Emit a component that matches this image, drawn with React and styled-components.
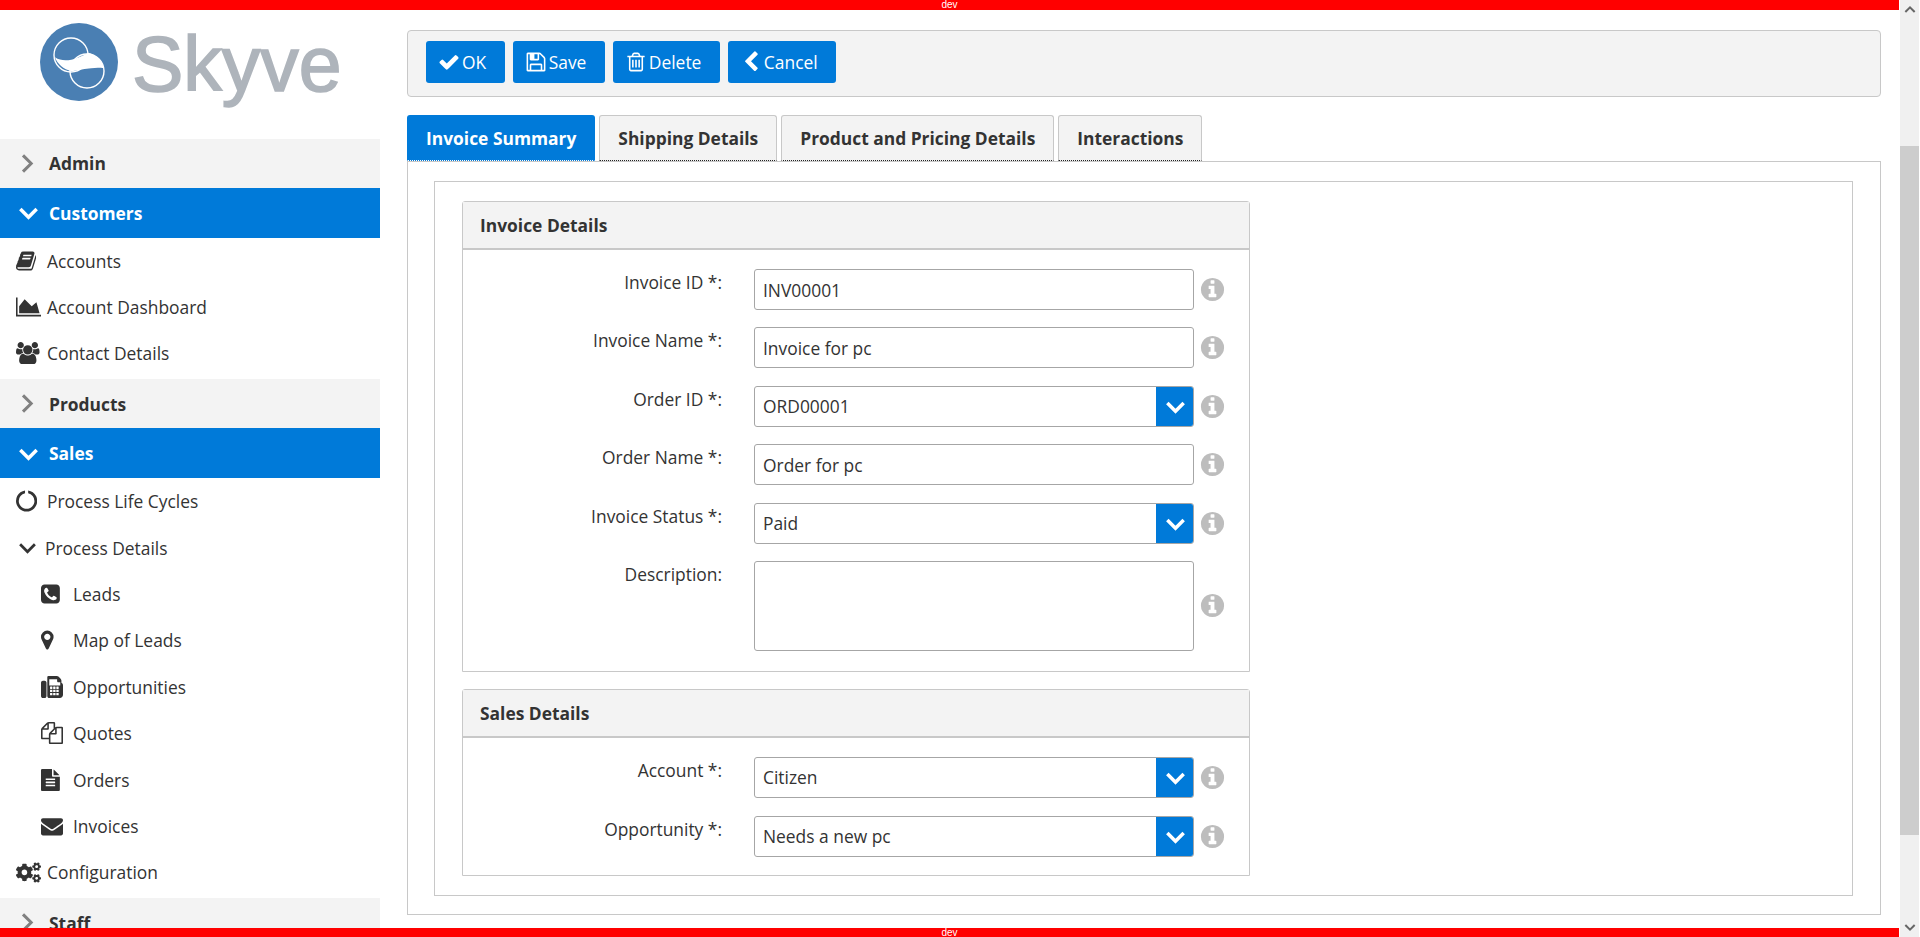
import React from "react";
import styled, { createGlobalStyle } from "styled-components";
import { FaCogs } from "react-icons/fa";

const BLUE = "#007ad9";
const LINE = "#c8c8c8";
const TEXT = "#333333";

const GlobalStyle = createGlobalStyle`
  html, body {
    margin: 0;
    height: 100%;
    overflow: hidden;
    background: #ffffff;
  }
  * {
    box-sizing: border-box;
  }
`;

const Page = styled.div`
  position: relative;
  display: flex;
  width: 1920px;
  height: 937px;
  overflow: hidden;
  font-family: "Open Sans", sans-serif;
  font-size: 17.4px;
  color: ${TEXT};
`;

const DevBar = styled.div`
  position: absolute;
  left: 0;
  ${(p) => (p.$bottom ? "bottom: 0; height: 9px;" : "top: 0; height: 10px;")}
  width: 1899px;
  background: #ff0000;
  color: #ffffff;
  font-family: "Liberation Sans", sans-serif;
  font-size: 10px;
  line-height: 10px;
  text-align: center;
  z-index: 2;
`;

/* sidebar */

const Sidebar = styled.aside`
  flex: none;
  width: 380px;
  overflow: hidden;
`;

const Logo = styled.div`
  display: flex;
  gap: 14px;
  height: 138.5px;
  padding: 23px 0 0 40px;

  svg {
    flex: none;
  }
`;

const LogoWord = styled.span`
  font-family: "Liberation Sans", sans-serif;
  font-size: 77px;
  line-height: 78px;
  margin-top: 2px;
  color: #aeb4bb;
  -webkit-text-stroke: 1.6px #aeb4bb;
`;

const Section = styled.div`
  display: flex;
  align-items: center;
  height: 49.5px;
  font-weight: 700;
  background: ${(p) => (p.$open ? BLUE : "#f3f3f3")};
  color: ${(p) => (p.$open ? "#ffffff" : TEXT)};

  svg {
    flex: none;
    margin-left: ${(p) => (p.$open ? "18px" : "16px")};
    margin-right: ${(p) => (p.$open ? "10px" : "12px")};
  }
`;

const Items = styled.div`
  padding-bottom: 2.3px;
`;

const Item = styled.div`
  display: flex;
  align-items: center;
  height: 46.4px;
  padding-left: ${(p) => (p.$nested ? "41px" : "16px")};
`;

const IconSlot = styled.span`
  display: flex;
  align-items: center;
  flex: none;
  width: ${(p) => (p.$nested ? "32px" : "31px")};
  color: ${TEXT};
`;

const TreeToggle = styled.span`
  display: flex;
  align-items: center;
  flex: none;
  width: 27px;
  margin-left: 2px;
`;

/* main column */

const Main = styled.main`
  flex: 1;
  min-width: 0;
  padding: 30px 19px 0 27px;
`;

const Toolbar = styled.div`
  display: flex;
  gap: 8px;
  height: 67px;
  padding: 10px 18px;
  background: #f3f3f3;
  border: 1px solid ${LINE};
  border-radius: 4px;
`;

const ActionButton = styled.button`
  display: flex;
  align-items: center;
  gap: 2px;
  height: 42px;
  padding: 0 18.5px 0 12px;
  border: none;
  border-radius: 3px;
  background: ${BLUE};
  color: #ffffff;
  font-family: inherit;
  font-size: 17.4px;
`;

const Tabs = styled.div`
  display: flex;
  gap: 4px;
  height: 46px;
  margin-top: 18px;
`;

const Tab = styled.div`
  display: flex;
  align-items: center;
  padding: 0 18px;
  font-weight: 700;
  border: 1px solid ${(p) => (p.$active ? BLUE : LINE)};
  border-bottom: 1px dotted ${(p) => (p.$active ? "#ffffff" : "#222222")};
  border-radius: 3px 3px 0 0;
  background: ${(p) => (p.$active ? BLUE : "#f3f3f3")};
  color: ${(p) => (p.$active ? "#ffffff" : TEXT)};
`;

const TabPanel = styled.div`
  height: 754px;
  padding: 19px 27px 19px 26px;
  border: 1px solid ${LINE};
`;

const InnerBox = styled.div`
  height: 715px;
  padding: 19px 27px;
  border: 1px solid ${LINE};
`;

const Panel = styled.section`
  width: 788px;
  border: 1px solid ${LINE};
  border-radius: 3px 3px 0 0;

  & + & {
    margin-top: 17px;
  }
`;

const PanelHeader = styled.h2`
  margin: 0;
  height: 48px;
  padding: 0 17px;
  font-size: 17.4px;
  font-weight: 700;
  line-height: 46px;
  background: #f3f3f3;
  border-bottom: 2px solid ${LINE};
`;

const FormGrid = styled.div`
  display: grid;
  grid-template-columns: 259px 440px 22px;
  column-gap: 32px;
  row-gap: ${(p) => p.$gap}px;
  padding: 19px 0 ${(p) => p.$bottom}px;

  > :nth-child(3n) {
    margin-left: -27px;
  }
`;

const FieldLabel = styled.label`
  padding-top: 1px;
  line-height: 24px;
  text-align: right;
`;

const TextInput = styled.input`
  display: block;
  width: 440px;
  height: 41px;
  padding: 0 8px;
  border: 1px solid #a6a6a6;
  border-radius: 3px;
  font-family: inherit;
  font-size: 17.4px;
  color: ${TEXT};
  background: #ffffff;
`;

const TextArea = styled.textarea`
  display: block;
  width: 440px;
  height: 90px;
  padding: 8px;
  border: 1px solid #a6a6a6;
  border-radius: 3px;
  resize: none;
  font-family: inherit;
  font-size: 17.4px;
`;

const Dropdown = styled.div`
  display: flex;
  width: 440px;
  height: 41px;
  border: 1px solid #a6a6a6;
  border-radius: 3px;
  overflow: hidden;
`;

const DropdownValue = styled.span`
  flex: 1;
  padding: 0 8px;
  line-height: 39px;
`;

const DropdownArrow = styled.span`
  display: flex;
  align-items: center;
  justify-content: center;
  flex: none;
  width: 38px;
  margin: -1px -1px -1px 0;
  background: ${BLUE};
`;

const Info = styled.span`
  display: flex;
  align-items: center;
  align-self: center;
  color: #bdbdbd;
`;

/* fake window scrollbar, the reference has a styled one */

const ScrollBar = styled.div`
  flex: none;
  display: flex;
  flex-direction: column;
  width: 19px;
  margin-right: 1px;
  background: #f0f0f0;
`;

const ScrollArrow = styled.span`
  display: flex;
  align-items: center;
  justify-content: center;
  height: 20px;
`;

const ScrollThumb = styled.div`
  height: 689px;
  margin: 126px 0 82px;
  background: #cdcdcd;
`;

const Chevron = ({ dir = "right", color = "#ffffff", size = 18, width = 3 }) => {
  const points = {
    right: "6,2 13,9 6,16",
    down: "2,6 9,13 16,6",
    up: "2,12 9,5 16,12",
  }[dir];
  return (
    <svg width={size} height={size} viewBox="0 0 18 18" fill="none">
      <polyline points={points} stroke={color} strokeWidth={width} />
    </svg>
  );
};

// font awesome 4 glyphs, vx/w crop the 1792 box to the glyph's own advance
const Fa4 = ({ d, size = 22, vx = 0, w = 1792 }) => (
  <svg
    width={(size * w) / 1792}
    height={size}
    viewBox={`${vx} 0 ${w} 1792`}
    fill="currentColor"
  >
    <path d={d} />
  </svg>
);

const paths = {
  book: "M1639 478q40 57 18 129l-275 906q-19 64-76.5 107.5t-122.5 43.5h-923q-77 0-148.5-53.5t-99.5-131.5q-24-67-2-127 0-4 3-27t4-37q1-8-3-21.5t-3-19.5q2-11 8-21t16.5-23.5 16.5-23.5q23-38 45-91.5t30-91.5q3-10 .5-30t-.5-28q3-11 17-28t17-23q21-36 42-92t25-90q1-9-2.5-32t.5-28q4-13 22-30.5t22-22.5q19-26 42.5-84.5t27.5-96.5q1-8-3-25.5t-2-26.5q2-8 9-18t18-23 17-21q8-12 16.5-30.5t15-35 16-36 19.5-32 26.5-23.5 36-11.5 47.5 5.5l-1 3q38-9 51-9h761q74 0 114 56t18 130l-274 906q-36 119-71.5 153.5t-128.5 34.5h-869q-27 0-38 15-11 16-1 43 24 70 144 70h923q29 0 56-15.5t35-41.5l300-987q7-22 5-57 38 15 59 43zm-1064 2q-4 13 2 22.5t20 9.5h608q13 0 25.5-9.5t16.5-22.5l21-64q4-13-2-22.5t-20-9.5h-608q-13 0-25.5 9.5t-16.5 22.5zm-83 256q-4 13 2 22.5t20 9.5h608q13 0 25.5-9.5t16.5-22.5l21-64q4-13-2-22.5t-20-9.5h-608q-13 0-25.5 9.5t-16.5 22.5z",
  area: "M2048 1536v128h-2048v-1536h128v1408h1920zm-384-1024l256 896h-1664v-576l448-576 576 576z",
  users:
    "M593 896q-162 5-265 128h-134q-82 0-138-40.5t-56-118.5q0-353 124-353 6 0 43.5 21t97.5 42.5 119 21.5q67 0 133-23-5 37-5 66 0 139 81 256zm1071 637q0 120-73 189.5t-194 69.5h-874q-121 0-194-69.5t-73-189.5q0-53 3.5-103.5t14-109 26.5-108.5 43-97.5 62-81 85.5-53.5 111.5-20q10 0 43 21.5t73 48 107 48 135 21.5 135-21.5 107-48 73-48 43-21.5q61 0 111.5 20t85.5 53.5 62 81 43 97.5 26.5 108.5 14 109 3.5 103.5zm-1024-1277q0 106-75 181t-181 75-181-75-75-181 75-181 181-75 181 75 75 181zm704 384q0 159-112.5 271.5t-271.5 112.5-271.5-112.5-112.5-271.5 112.5-271.5 271.5-112.5 271.5 112.5 112.5 271.5zm576 225q0 78-56 118.5t-138 40.5h-134q-103-123-265-128 81-117 81-256 0-29-5-66 66 23 133 23 59 0 119-21.5t97.5-42.5 43.5-21q124 0 124 353zm-128-609q0 106-75 181t-181 75-181-75-75-181 75-181 181-75 181 75 75 181z",
  files:
    "M1696 384q40 0 68 28t28 68v1216q0 40-28 68t-68 28h-960q-40 0-68-28t-28-68v-288h-544q-40 0-68-28t-28-68v-672q0-40 20-88t48-76l408-408q28-28 76-48t88-20h416q40 0 68 28t28 68v328q68-40 128-40h416zm-544 213l-299 299h299v-299zm-640-384l-299 299h299v-299zm196 647l316-316v-416h-384v416q0 40-28 68t-68 28h-416v640h512v-256q0-40 20-92t48-80zm956 804v-1152h-384v416q0 40-28 68t-68 28h-416v640h896z",
  notch:
    "M1760 896q0 176-68.5 336t-184 275.5-275.5 184-336 68.5-336-68.5-275.5-184-184-275.5-68.5-336q0-213 97-398.5t265-305.5 374-151v228q-221 45-366.5 221t-145.5 406q0 130 51 248.5t136.5 204 204 136.5 248.5 51 248.5-51 204-136.5 136.5-204 51-248.5q0-230-145.5-406t-366.5-221v-228q206 31 374 151t265 305.5 97 398.5z",
  phone:
    "M1408 1193q0-11-2-16t-18-16.5-40.5-25-47.5-26.5-45.5-25-28.5-15q-5-3-19-13t-25-15-21-5q-15 0-36.5 20.5t-39.5 45-38.5 45-33.5 20.5q-7 0-16.5-3.5t-15.5-6.5-17-9.5-14-8.5q-99-55-170-126.5t-127-170.5q-2-3-8.5-14t-9.5-17-6.5-15.5-3.5-16.5q0-13 20.5-33.5t45-38.5 45-39.5 20.5-36.5q0-10-5-21t-15-25-13-19q-3-6-15-28.5t-25-45.5-26.5-47.5-25-40.5-16.5-18-16-2q-48 0-101 22-46 21-80 94.5t-34 130.5q0 16 2.5 34t5 30.5 9 33 10 29.5 12.5 33 11 30q60 164 216.5 320.5t320.5 216.5q6 2 30 11t33 12.5 29.5 10 33 9 30.5 5 34 2.5q57 0 130.5-34t94.5-80q22-53 22-101zm256-777v960q0 119-84.5 203.5t-203.5 84.5h-960q-119 0-203.5-84.5t-84.5-203.5v-960q0-119 84.5-203.5t203.5-84.5h960q119 0 203.5 84.5t84.5 203.5z",
  marker:
    "M1152 640q0-106-75-181t-181-75-181 75-75 181 75 181 181 75 181-75 75-181zm256 0q0 109-33 179l-364 774q-16 33-47.5 52t-67.5 19-67.5-19-46.5-52l-365-774q-33-70-33-179 0-212 150-362t362-150 362 150 150 362z",
  fax: "M288 384q66 0 113 47t47 113v1088q0 66-47 113t-113 47h-128q-66 0-113-47t-47-113v-1088q0-66 47-113t113-47h128zm1376 163q58 34 93 93t35 128v768q0 106-75 181t-181 75h-864q-66 0-113-47t-47-113v-1536q0-40 28-68t68-28h672q40 0 88 20t76 48l152 152q28 28 48 76t20 88v163zm-736 989v-128q0-14-9-23t-23-9h-128q-14 0-23 9t-9 23v128q0 14 9 23t23 9h128q14 0 23-9t9-23zm0-256v-128q0-14-9-23t-23-9h-128q-14 0-23 9t-9 23v128q0 14 9 23t23 9h128q14 0 23-9t9-23zm0-256v-128q0-14-9-23t-23-9h-128q-14 0-23 9t-9 23v128q0 14 9 23t23 9h128q14 0 23-9t9-23zm256 512v-128q0-14-9-23t-23-9h-128q-14 0-23 9t-9 23v128q0 14 9 23t23 9h128q14 0 23-9t9-23zm0-256v-128q0-14-9-23t-23-9h-128q-14 0-23 9t-9 23v128q0 14 9 23t23 9h128q14 0 23-9t9-23zm0-256v-128q0-14-9-23t-23-9h-128q-14 0-23 9t-9 23v128q0 14 9 23t23 9h128q14 0 23-9t9-23zm256 512v-128q0-14-9-23t-23-9h-128q-14 0-23 9t-9 23v128q0 14 9 23t23 9h128q14 0 23-9t9-23zm0-256v-128q0-14-9-23t-23-9h-128q-14 0-23 9t-9 23v128q0 14 9 23t23 9h128q14 0 23-9t9-23zm0-256v-128q0-14-9-23t-23-9h-128q-14 0-23 9t-9 23v128q0 14 9 23t23 9h128q14 0 23-9t9-23zm128-256v-256h-160q-40 0-68-28t-28-68v-160h-640v512h896z",
  fileText:
    "M1596 476q14 14 28 36h-472v-472q22 14 36 28zm-476 164h544v1056q0 40-28 68t-68 28h-1344q-40 0-68-28t-28-68v-1600q0-40 28-68t68-28h800v544q0 40 28 68t68 28zm160 736v-64q0-14-9-23t-23-9h-704q-14 0-23 9t-9 23v64q0 14 9 23t23 9h704q14 0 23-9t9-23zm0-256v-64q0-14-9-23t-23-9h-704q-14 0-23 9t-9 23v64q0 14 9 23t23 9h704q14 0 23-9t9-23zm0-256v-64q0-14-9-23t-23-9h-704q-14 0-23 9t-9 23v64q0 14 9 23t23 9h704q14 0 23-9t9-23z",
  envelope:
    "M1792 710v794q0 66-47 113t-113 47h-1472q-66 0-113-47t-47-113v-794q44 49 101 87 362 246 497 345 57 42 92.5 65.5t94.5 48 110 24.5h2q51 0 110-24.5t94.5-48 92.5-65.5q170-123 498-345 57-39 100-87zm0-294q0 79-49 151t-122 123q-376 261-468 325-10 7-42.5 30.5t-54 38-52 32.5-57.5 27-50 9h-2q-23 0-50-9t-57.5-27-52-32.5-54-38-42.5-30.5q-91-64-262-182.5t-205-142.5q-62-42-117-115.5t-55-136.5q0-78 41.5-130t118.5-52h1472q65 0 112.5 47t47.5 113z",
  check:
    "M1671 566q0 40-28 68l-724 724-136 136q-28 28-68 28t-68-28l-136-136-362-362q-28-28-28-68t28-68l136-136q28-28 68-28t68 28l294 295 656-657q28-28 68-28t68 28l136 136q28 28 28 68z",
  save: "M512 1536h768v-384h-768v384zm896 0h128v-896q0-14-10-38.5t-20-34.5l-281-281q-10-10-34-20t-39-10v416q0 40-28 68t-68 28h-576q-40 0-68-28t-28-68v-416h-128v1280h128v-416q0-40 28-68t68-28h832q40 0 68 28t28 68v416zm-384-928v-320q0-13-9.5-22.5t-22.5-9.5h-192q-13 0-22.5 9.5t-9.5 22.5v320q0 13 9.5 22.5t22.5 9.5h192q13 0 22.5-9.5t9.5-22.5zm640 32v928q0 40-28 68t-68 28h-1344q-40 0-68-28t-28-68v-1344q0-40 28-68t68-28h928q40 0 88 20t76 48l280 280q28 28 48 76t20 88z",
  trash:
    "M704 736v576q0 14-9 23t-23 9h-64q-14 0-23-9t-9-23v-576q0-14 9-23t23-9h64q14 0 23 9t9 23zm256 0v576q0 14-9 23t-23 9h-64q-14 0-23-9t-9-23v-576q0-14 9-23t23-9h64q14 0 23 9t9 23zm256 0v576q0 14-9 23t-23 9h-64q-14 0-23-9t-9-23v-576q0-14 9-23t23-9h64q14 0 23 9t9 23zm128 724v-948h-896v948q0 22 7 40.5t14.5 27 10.5 8.5h832q3 0 10.5-8.5t14.5-27 7-40.5zm-672-1076h448l-48-117q-7-9-17-11h-317q-10 2-17 11zm928 32v64q0 14-9 23t-23 9h-96v948q0 83-47 143.5t-113 60.5h-832q-66 0-113-58.5t-47-141.5v-952h-96q-14 0-23-9t-9-23v-64q0-14 9-23t23-9h309l70-167q15-37 54-63t79-26h320q40 0 79 26t54 63l70 167h309q14 0 23 9t9 23z",
  left: "M1427 301l-531 531 531 531q19 19 19 45t-19 45l-166 166q-19 19-45 19t-45-19l-742-742q-19-19-19-45t19-45l742-742q19-19 45-19t45 19l166 166q19 19 19 45t-19 45z",
  info: "M1152 1376v-160q0-14-9-23t-23-9h-96v-512q0-14-9-23t-23-9h-320q-14 0-23 9t-9 23v160q0 14 9 23t23 9h96v320h-96q-14 0-23 9t-9 23v160q0 14 9 23t23 9h448q14 0 23-9t9-23zm-128-896v-160q0-14-9-23t-23-9h-192q-14 0-23 9t-9 23v160q0 14 9 23t23 9h192q14 0 23-9t9-23zm640 416q0 209-103 385.5t-279.5 279.5-385.5 103-385.5-103-279.5-279.5-103-385.5 103-385.5 279.5-279.5 385.5-103 385.5 103 279.5 279.5 103 385.5z",
};

const LogoMark = () => (
  <svg width="78" height="78" viewBox="0 0 78 78">
    <circle cx="39" cy="39" r="39" fill="#4a7fb3" />
    <circle cx="31" cy="32" r="17" fill="none" stroke="#ffffff" strokeWidth="1.4" />
    <circle cx="47" cy="48" r="17" fill="none" stroke="#ffffff" strokeWidth="1.4" />
    <path
      d="M15 34.3C25 41 38.3 35.3 48.3 29.7C56.7 32 62.7 38.7 64 45.3C53.3 43.7 41.7 47 31.7 48.3C23.3 46.3 17.3 41 15 34.3Z"
      fill="#ffffff"
    />
  </svg>
);

const SectionRow = ({ label, open }) => (
  <Section $open={open}>
    {open ? <Chevron dir="down" size={21} /> : <Chevron color="#808080" size={21} width={2.6} />}
    <span>{label}</span>
  </Section>
);

const NavItem = ({ icon, label, nested }) => (
  <Item $nested={nested}>
    <IconSlot $nested={nested}>{icon}</IconSlot>
    <span>{label}</span>
  </Item>
);

const InfoIcon = () => (
  <Info>
    <Fa4 d={paths.info} size={27} />
  </Info>
);

const Field = ({ label, value }) => (
  <>
    <FieldLabel>{label}</FieldLabel>
    <TextInput readOnly value={value} />
    <InfoIcon />
  </>
);

const SelectField = ({ label, value }) => (
  <>
    <FieldLabel>{label}</FieldLabel>
    <Dropdown>
      <DropdownValue>{value}</DropdownValue>
      <DropdownArrow>
        <Chevron dir="down" size={21} />
      </DropdownArrow>
    </Dropdown>
    <InfoIcon />
  </>
);

const App = () => {
  return (
    <Page>
      <GlobalStyle />
      <DevBar>dev</DevBar>
      <Sidebar>
        <Logo>
          <LogoMark />
          <LogoWord>Skyve</LogoWord>
        </Logo>
        <SectionRow label="Admin" />
        <SectionRow label="Customers" open />
        <Items>
          <NavItem icon={<Fa4 d={paths.book} w={1664} />} label="Accounts" />
          <NavItem icon={<Fa4 d={paths.area} w={2048} size={22} />} label="Account Dashboard" />
          <NavItem icon={<Fa4 d={paths.users} w={2048} size={22} />} label="Contact Details" />
        </Items>
        <SectionRow label="Products" />
        <SectionRow label="Sales" open />
        <Items>
          <NavItem icon={<Fa4 d={paths.notch} vx={32} w={1728} />} label="Process Life Cycles" />
          <Item>
            <TreeToggle>
              <Chevron dir="down" color={TEXT} size={19} width={2.6} />
            </TreeToggle>
            <span>Process Details</span>
          </Item>
          <NavItem nested icon={<Fa4 d={paths.phone} vx={128} w={1536} />} label="Leads" />
          <NavItem nested icon={<Fa4 d={paths.marker} vx={384} w={1024} />} label="Map of Leads" />
          <NavItem nested icon={<Fa4 d={paths.fax} />} label="Opportunities" />
          <NavItem nested icon={<Fa4 d={paths.files} />} label="Quotes" />
          <NavItem nested icon={<Fa4 d={paths.fileText} vx={128} w={1536} />} label="Orders" />
          <NavItem nested icon={<Fa4 d={paths.envelope} />} label="Invoices" />
          <NavItem icon={<FaCogs size={25} />} label="Configuration" />
        </Items>
        <SectionRow label="Staff" />
      </Sidebar>
      <Main>
        <Toolbar>
          <ActionButton>
            <Fa4 d={paths.check} />
            OK
          </ActionButton>
          <ActionButton>
            <Fa4 d={paths.save} />
            Save
          </ActionButton>
          <ActionButton>
            <Fa4 d={paths.trash} />
            Delete
          </ActionButton>
          <ActionButton>
            <Fa4 d={paths.left} />
            Cancel
          </ActionButton>
        </Toolbar>
        <Tabs>
          <Tab $active>Invoice Summary</Tab>
          <Tab>Shipping Details</Tab>
          <Tab>Product and Pricing Details</Tab>
          <Tab>Interactions</Tab>
        </Tabs>
        <TabPanel>
          <InnerBox>
            <Panel>
              <PanelHeader>Invoice Details</PanelHeader>
              <FormGrid $gap={17.4} $bottom={20}>
                <Field label="Invoice ID *:" value="INV00001" />
                <Field label="Invoice Name *:" value="Invoice for pc" />
                <SelectField label="Order ID *:" value="ORD00001" />
                <Field label="Order Name *:" value="Order for pc" />
                <SelectField label="Invoice Status *:" value="Paid" />
                <FieldLabel>Description:</FieldLabel>
                <TextArea readOnly />
                <InfoIcon />
              </FormGrid>
            </Panel>
            <Panel>
              <PanelHeader>Sales Details</PanelHeader>
              <FormGrid $gap={18} $bottom={18}>
                <SelectField label="Account *:" value="Citizen" />
                <SelectField label="Opportunity *:" value="Needs a new pc" />
              </FormGrid>
            </Panel>
          </InnerBox>
        </TabPanel>
      </Main>
      <ScrollBar>
        <ScrollArrow>
          <Chevron dir="up" color="#666666" size={12} width={3} />
        </ScrollArrow>
        <ScrollThumb />
        <ScrollArrow>
          <Chevron dir="down" color="#666666" size={12} width={3} />
        </ScrollArrow>
      </ScrollBar>
      <DevBar $bottom>dev</DevBar>
    </Page>
  );
};

export default App;
